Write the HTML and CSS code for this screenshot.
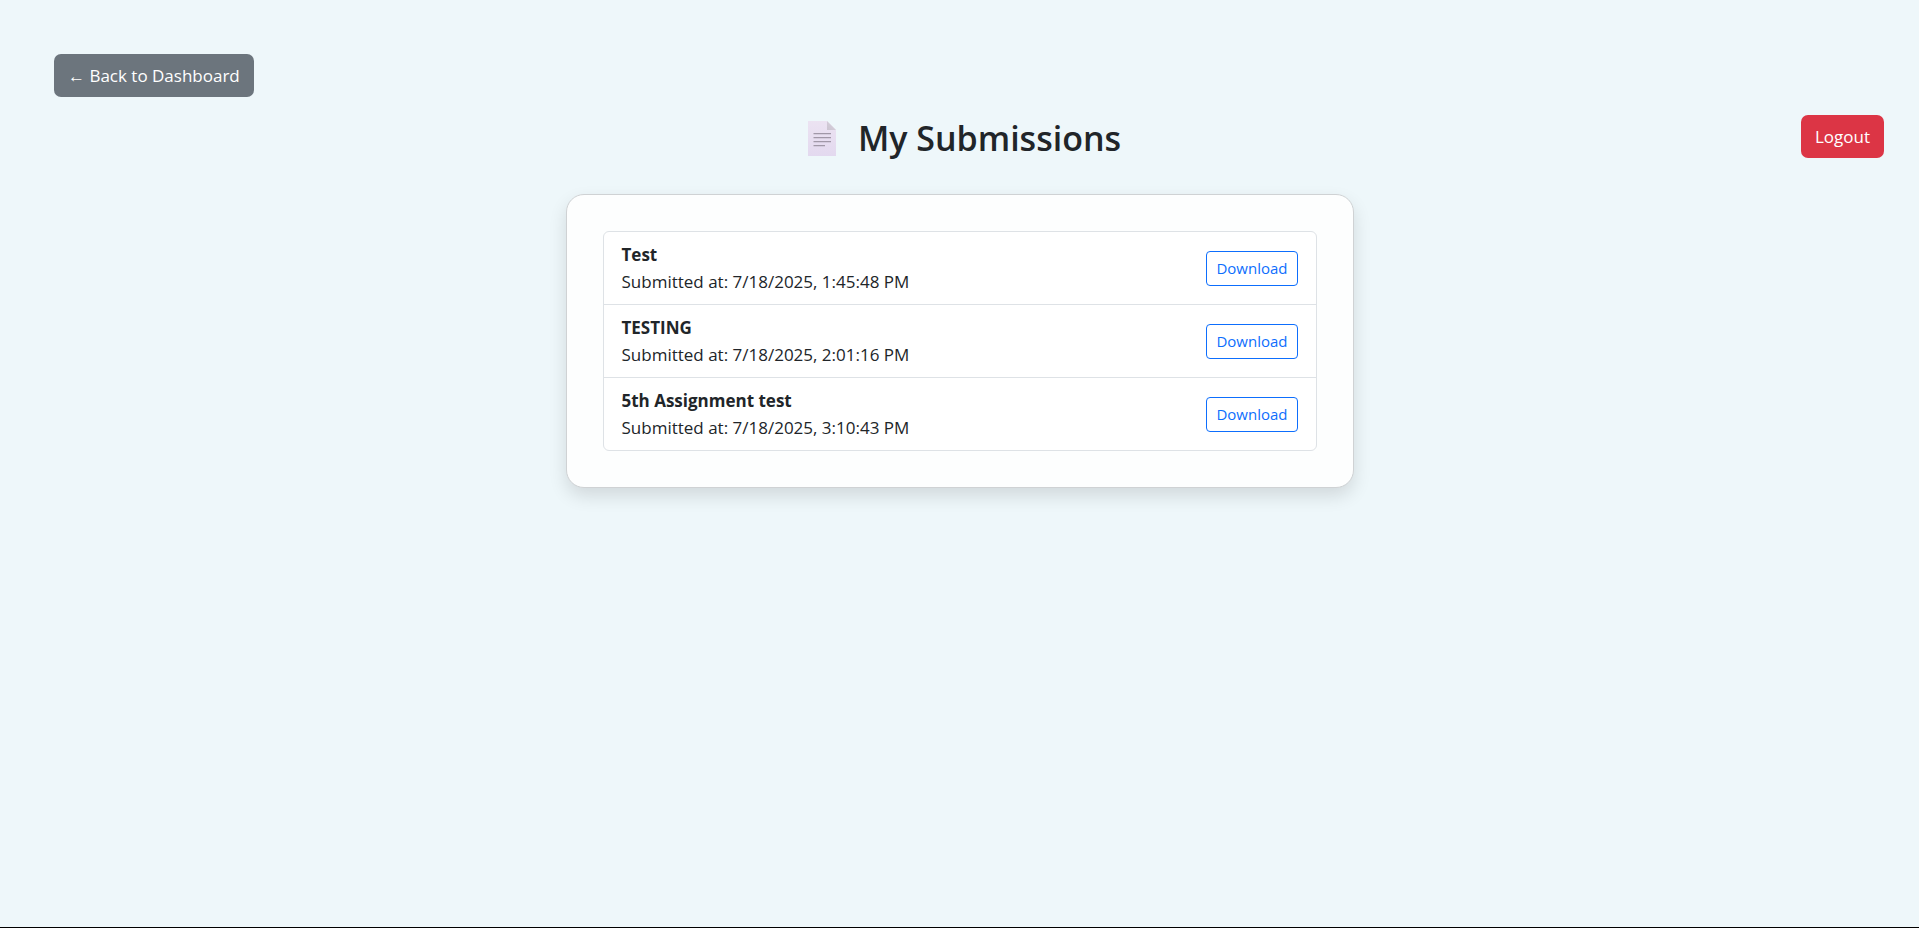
FILE: index.html
```
<!DOCTYPE html>
<html lang="en">
<head>
<meta charset="utf-8">
<title>My Submissions</title>
<link rel="stylesheet" href="styles.css">
</head>
<body>
<main class="page">
  <nav class="back-row"><button type="button" class="btn btn-secondary">← Back to Dashboard</button></nav>
  <header class="page-header">
    <h1 class="title">
      <svg class="title-icon" viewBox="0 0 28 35" aria-hidden="true">
        <defs>
          <linearGradient id="sheet" x1="0" y1="0" x2="0" y2="1"><stop offset="0" stop-color="#ece3f2"/><stop offset="1" stop-color="#e3d9ef"/></linearGradient>
          <linearGradient id="fold" x1="0" y1="1" x2="1" y2="0"><stop offset="0" stop-color="#cbc4d0"/><stop offset="1" stop-color="#dad3df"/></linearGradient>
        </defs>
        <path d="M0 0H19L28 9V35H0Z" fill="url(#sheet)"/>
        <path d="M19 0L28 9H19Z" fill="url(#fold)"/>
        <path d="M5.5 12.7H23M5.5 16.7H23M5.5 20.6H23M5.5 24.6H17" stroke="#a198a8" stroke-width="1.2"/>
      </svg>
      <span>My Submissions</span>
    </h1>
    <button type="button" class="btn btn-danger">Logout</button>
  </header>
  <section class="card">
    <ul class="list">
      <li class="item">
        <div><strong class="name">Test</strong><div>Submitted at: 7/18/2025, 1:45:48 PM</div></div>
        <a class="download" href="#">Download</a>
      </li>
      <li class="item">
        <div><strong class="name">TESTING</strong><div>Submitted at: 7/18/2025, 2:01:16 PM</div></div>
        <a class="download" href="#">Download</a>
      </li>
      <li class="item">
        <div><strong class="name">5th Assignment test</strong><div>Submitted at: 7/18/2025, 3:10:43 PM</div></div>
        <a class="download" href="#">Download</a>
      </li>
    </ul>
  </section>
</main>
</body>
</html>
```
FILE: styles.css
```
*, *::before, *::after { box-sizing: border-box; }

body {
  margin: 0;
  background: #eef7fa;
  color: #212529;
  font-family: "Open Sans", "Noto Sans", sans-serif;
  font-size: 17px;
  line-height: 27px;
}

.page {
  display: flex;
  flex-direction: column;
  min-height: 100vh;
  padding: 54px 35px;
  border-bottom: 1px solid #000;
}

.back-row { padding: 0 19px; }

.btn {
  padding: 7px 13px;
  border: 1px solid transparent;
  border-radius: 7px;
  color: #fff;
  font: inherit;
  cursor: pointer;
}
.btn-secondary { background: #6c757d; }
.btn-danger { background: #dc3545; }

.page-header {
  display: grid;
  grid-template-columns: 1fr auto 1fr;
  align-items: start;
  margin-top: 18px;
}
.page-header .title { grid-column: 2; }
.page-header .btn { justify-self: end; }

.title {
  display: flex;
  align-items: center;
  gap: 22px;
  margin: 0;
  padding: 2px 0 0 10px;
  font-size: 34px;
  font-weight: 600;
  line-height: 43px;
}
.title-icon { width: 28px; height: 35px; }

.card {
  width: 100%;
  max-width: 788px;
  margin: 34px auto 0;
  padding: 36px;
  background: #fdfefe;
  border: 1px solid #cfd2d4;
  border-radius: 18px;
  box-shadow: 0 8px 18px rgba(0, 0, 0, 0.12);
}

.list {
  margin: 0;
  padding: 0;
  list-style: none;
  background: #fff;
  border: 1px solid #dee2e6;
  border-radius: 6px;
}

.item {
  display: flex;
  justify-content: space-between;
  align-items: center;
  padding: 9px 18px;
}
.item + .item { border-top: 1px solid #dee2e6; }

.name { display: block; font-weight: 700; }

.download {
  padding: 4px 9px;
  border: 1px solid #0d6efd;
  border-radius: 4px;
  color: #0d6efd;
  font-size: 15px;
  line-height: 25px;
  text-decoration: none;
}
```
